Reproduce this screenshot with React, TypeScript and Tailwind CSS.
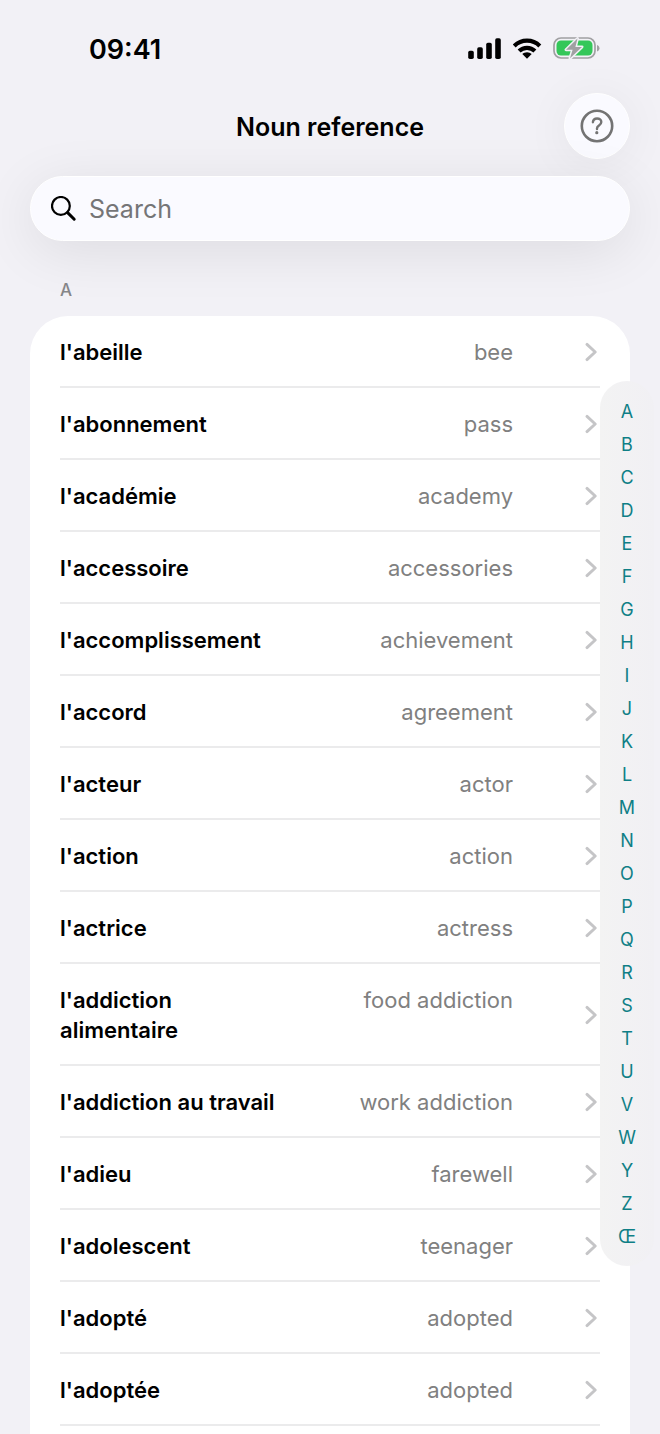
import { useState } from 'react';

interface Noun {
  id: string;
  french: string;
  english: string;
}

const nouns: Noun[] = [
  { id: 'abeille', french: "l'abeille", english: 'bee' },
  { id: 'abonnement', french: "l'abonnement", english: 'pass' },
  { id: 'academie', french: "l'académie", english: 'academy' },
  { id: 'accessoire', french: "l'accessoire", english: 'accessories' },
  { id: 'accomplissement', french: "l'accomplissement", english: 'achievement' },
  { id: 'accord', french: "l'accord", english: 'agreement' },
  { id: 'acteur', french: "l'acteur", english: 'actor' },
  { id: 'action', french: "l'action", english: 'action' },
  { id: 'actrice', french: "l'actrice", english: 'actress' },
  { id: 'addiction-alimentaire', french: "l'addiction alimentaire", english: 'food addiction' },
  { id: 'addiction-travail', french: "l'addiction au travail", english: 'work addiction' },
  { id: 'adieu', french: "l'adieu", english: 'farewell' },
  { id: 'adolescent', french: "l'adolescent", english: 'teenager' },
  { id: 'adopte', french: "l'adopté", english: 'adopted' },
  { id: 'adoptee', french: "l'adoptée", english: 'adopted' },
];

const letters = [...'ABCDEFGHIJKLMNOPQRSTUVWYZŒ'];

function StatusBar() {
  return (
    <div className="flex h-[93px] items-start justify-between pt-8 pr-[60px] pl-[89px]">
      <span className="text-[27px] leading-9 font-semibold">09:41</span>
      <div className="flex h-8 items-center gap-[11px]">
        <svg width="34" height="21" viewBox="0 0 34 21" fill="currentColor">
          <rect x="0.200" y="12.700" width="5.600" height="8.300" rx="1.700" />
          <rect x="9.200" y="9.200" width="5.600" height="11.800" rx="1.700" />
          <rect x="18.200" y="4.800" width="5.600" height="16.200" rx="1.700" />
          <rect x="27.200" y="0.200" width="5.600" height="20.800" rx="1.700" />
        </svg>
        <svg width="29" height="21" viewBox="0 0 29 21" fill="none" stroke="currentColor" strokeWidth="4.200">
          <path d="M1.200 7.900a18.300 18.300 0 0 1 25.600 0" />
          <path d="M6.100 13a11.300 11.300 0 0 1 15.800 0" />
          <path d="M14 14.200c-1.800 0-3.500.7-4.700 1.800l4.700 4.800 4.700-4.800a6.800 6.800 0 0 0-4.700-1.800z" fill="currentColor" stroke="none" />
        </svg>
        <svg width="47" height="24" viewBox="0 0 47 24">
          <rect x="1" y="2" width="41" height="20" rx="7" fill="none" stroke="#a0a0a2" strokeWidth="1.700" />
          <path d="M44 9v6.500c1.500-.5 2.500-1.700 2.500-3.250S45.500 9.500 44 9z" fill="#a0a0a2" />
          <rect x="3.500" y="4.500" width="36" height="15" rx="4.500" fill="#34c759" />
          <path
            d="M24.500 2.500 13 13.700h6.600L17 22.300 29 10.900h-6.600z"
            fill="#a0a0a2"
            stroke="#f2f1f6"
            strokeWidth="3"
            strokeLinejoin="round"
            paintOrder="stroke"
          />
        </svg>
      </div>
    </div>
  );
}

function Chevron() {
  return (
    <svg
      width="12"
      height="20"
      viewBox="0 0 12 20"
      fill="none"
      stroke="#c5c5c7"
      strokeWidth="2.900"
      strokeLinecap="round"
      strokeLinejoin="round"
      className="shrink-0"
    >
      <path d="M2 2.400 10.200 10 2 17.600" />
    </svg>
  );
}

function NounRow({ noun }: { noun: Noun }) {
  return (
    <li className="border-b-2 border-[#ebebec]">
      <a href={`#${noun.id}`} className="flex items-center gap-[72px] pt-[21px] pr-[3px] pb-[19px] text-[22px] leading-[30px]">
        <span className="grid flex-1 grid-cols-2">
          <span className="font-semibold text-black">{noun.french}</span>
          <span className="text-right text-[#808080]">{noun.english}</span>
        </span>
        <Chevron />
      </a>
    </li>
  );
}

export default function App() {
  const [search, setSearch] = useState('');

  const filteredNouns = nouns.filter(noun =>
    noun.french.toLowerCase().includes(search.toLowerCase()) ||
    noun.english.toLowerCase().includes(search.toLowerCase())
  );

  return (
    <div className="relative flex min-h-screen flex-col overflow-hidden bg-[#f2f1f6] font-[Inter,sans-serif] text-black">
      <StatusBar />

      <header className="grid grid-cols-[66px_1fr_66px] items-center px-[30px]">
        <h1 className="col-start-2 pt-0.5 text-center text-[25px] leading-8 font-semibold">Noun reference</h1>
        <button
          type="button"
          aria-label="Help"
          className="flex size-[66px] items-center justify-center rounded-full border border-white bg-[#fafaff] shadow-[0_4px_48px_rgba(0,0,0,0.06)]"
        >
          <svg width="34" height="34" viewBox="0 0 34 34" fill="none" stroke="#737373" strokeLinecap="round">
            <circle cx="17" cy="17" r="15.200" strokeWidth="2.600" />
            <path d="M12.900 13.200c.2-2.300 1.900-3.700 4.200-3.700 2.400 0 4.200 1.500 4.200 3.600 0 1.700-.9 2.600-2.300 3.500-1.400.9-2 1.600-2 2.900v.5" strokeWidth="2.400" />
            <circle cx="16.800" cy="23.700" r="1.600" fill="#737373" stroke="none" />
          </svg>
        </button>
      </header>

      <div className="px-[30px] pt-[17px]">
        <label className="flex h-[65px] items-center gap-3 rounded-full border border-white bg-[#fafaff] px-5 shadow-[0_10px_56px_rgba(0,0,0,0.09)]">
          <svg width="26" height="26" viewBox="0 0 26 26" fill="none" stroke="currentColor" strokeLinecap="round">
            <circle cx="9.900" cy="9.900" r="8.900" strokeWidth="2.200" />
            <path d="m16.600 16.600 6.600 6.600" strokeWidth="3" />
          </svg>
          <input
            type="text"
            aria-label="Search"
            placeholder="Search"
            value={search}
            onChange={(e) => setSearch(e.target.value)}
            className="min-w-0 flex-1 bg-transparent text-[25px] leading-8 outline-none placeholder:text-[#757577]"
          />
        </label>
      </div>

      <main className="flex flex-1 flex-col px-[30px]">
        <h2 className="px-[30px] pt-[37px] pb-3.5 text-[17px] leading-6 font-medium text-[#858588]">A</h2>
        <ul className="flex-1 rounded-t-[38px] bg-white px-[30px]">
          {filteredNouns.map(noun => (
            <NounRow key={noun.id} noun={noun} />
          ))}
        </ul>
      </main>

      {/* Alphabet index floats over the list */}
      <nav
        aria-label="Alphabet"
        className="absolute top-[381px] right-1.5 flex w-[54px] flex-col rounded-[27px] bg-linear-to-r from-[#f3f3f3] to-[#f1f0f4] pt-3.5 pb-[13px] text-center text-[18px] leading-[33px] text-[#0f7f86]"
      >
        {letters.map(letter => (
          <a key={letter} href={`#${letter}`}>{letter}</a>
        ))}
      </nav>
    </div>
  );
}
